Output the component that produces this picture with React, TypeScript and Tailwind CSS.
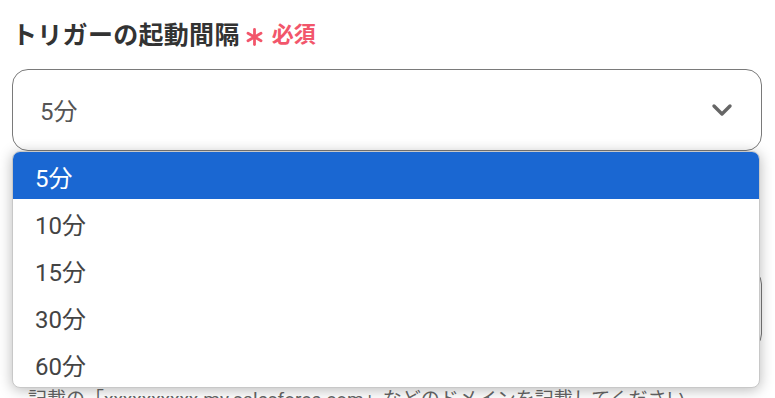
import React from "react";

const options = ["5分", "10分", "15分", "30分", "60分"];

const Chevron = () => (
  <svg width="22" height="14" viewBox="0 0 22 14" fill="none">
    <path
      d="M3 3l8 8 8-8"
      stroke="#666"
      strokeWidth="3.4"
      strokeLinecap="round"
      strokeLinejoin="round"
    />
  </svg>
);

const App = () => {
  return (
    <div
      className="relative h-[398px] w-[775px] overflow-hidden bg-white pl-[12px] pr-[13px] pt-[18px]"
      style={{ fontFamily: 'Roboto, "Noto Sans CJK JP", sans-serif' }}
    >
      {/* Label */}
      <div className="flex h-[34px] items-center">
        <span className="text-[25px] font-bold leading-none tracking-[0.3px] text-[#333]">
          トリガーの起動間隔
        </span>
        <span className="ml-[6px] flex items-center text-[22px] font-bold leading-none text-[#f2566b]">
          <svg width="17" height="18" viewBox="0 0 17 18" className="mr-[9px] mt-[3px]">
            <g stroke="#f2566b" strokeWidth="2.8" strokeLinecap="round">
              <path d="M8.5 1.5v15" />
              <path d="M2 5.3l13 7.4" />
              <path d="M15 5.3L2 12.7" />
            </g>
          </svg>
          必須
        </span>
      </div>

      {/* Select */}
      <div className="relative mt-[17px]">
        <div className="flex h-[82px] items-center justify-between rounded-[16px] border border-[#7a7a7a] bg-white pl-[27px] pr-[28px]">
          <span className="pt-[3px] text-[24px] text-[#555]">5分</span>
          <Chevron />
        </div>

        {/* Dropdown list */}
        <ul className="absolute left-0 right-[2px] top-[82px] z-10 overflow-hidden rounded-[8px] border border-[#c8c8c8] bg-white shadow-[0_2px_14px_rgba(0,0,0,0.28)]">
          {options.map((o, i) => (
            <li
              key={o}
              className={
                i === 0
                  ? "flex h-[47px] items-center bg-[#1a67d2] pl-[22px] pt-[6px] text-[24px] text-white"
                  : "flex h-[47px] items-center pl-[22px] pt-[6px] text-[24px] text-[#444]"
              }
            >
              {o}
            </li>
          ))}
        </ul>
      </div>

      {/* Content behind the list */}
      <div className="mt-[117px] h-[82px] rounded-[16px] border border-[#7a7a7a] bg-white" />
      <p className="mt-[40px] pl-[16px] text-[19px] leading-none text-[#666]">
        記載の「xxxxxxxxxx.my.salesforce.com」などのドメインを記載してください
      </p>
    </div>
  );
};

export default App;
